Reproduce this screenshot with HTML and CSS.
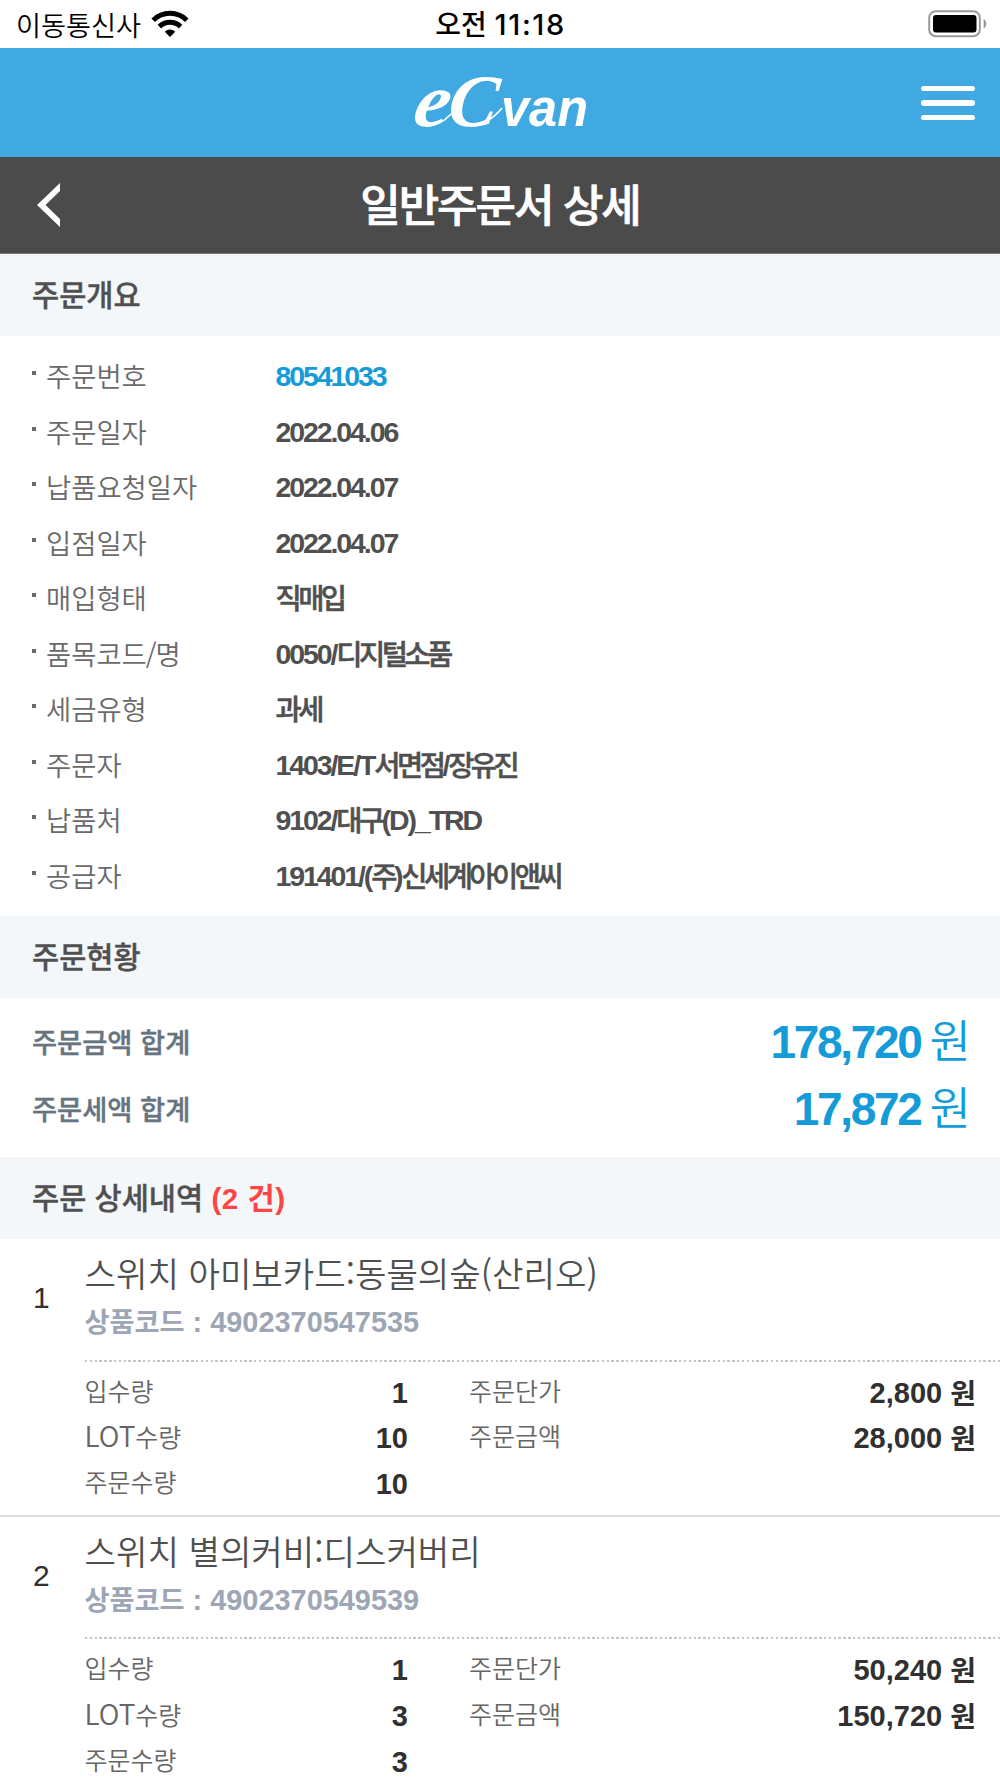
FILE: index.html
```html
<!DOCTYPE html>
<html lang="ko">
<head>
<meta charset="utf-8">
<title>일반주문서 상세</title>
<link rel="stylesheet" href="styles.css">
</head>
<body>
<div class="status">
  <div class="carrier"><span>이동통신사</span>
    <svg class="wifi" width="38" height="28" viewBox="0 0 38 28"><g fill="none" stroke="#000" stroke-width="5"><path d="M2.2 10.2a24 24 0 0 1 33.600 0"/><path d="M8.4 16.6a15.2 15.2 0 0 1 21.2 0"/></g><path d="M19 27l-5.2-5.3a7.4 7.4 0 0 1 10.4 0z"/></svg>
  </div>
  <div class="clock">오전 <span class="time">11:18</span></div>
  <svg class="battery" width="60" height="28" viewBox="0 0 60 28"><rect x="1.2" y="1.2" width="50.6" height="25" rx="6.5" fill="none" stroke="#999" stroke-width="2"/><rect x="5" y="5" width="43.5" height="17.5" rx="3" fill="#000"/><path d="M55.6 9c3.6 1.6 3.6 8 0 9.600z" fill="#999"/></svg>
</div>
<header class="brand">
  <svg class="logo" width="180" height="80" viewBox="0 0 180 80" fill="#fff"><text class="logo-e" transform="translate(1 54) skewX(-12)" textLength="35" lengthAdjust="spacingAndGlyphs">e</text><text class="logo-c" transform="translate(36 54) skewX(-8)" textLength="49" lengthAdjust="spacingAndGlyphs">C</text><text class="logo-van" x="91" y="54" textLength="87" lengthAdjust="spacingAndGlyphs">van</text><path d="M16 54.300Q30 54 41 42M60 54.300Q78 53 92 36" fill="none" stroke="#fff" stroke-width="1.6"/></svg>
  <div class="menu"><i></i><i></i><i></i></div>
</header>
<div class="titlebar">
  <svg class="back" width="24" height="44" viewBox="0 0 24 44"><path d="M23 0v8L8.500 22 23 36v8L0 22z" fill="#fff"/></svg>
  <h1>일반주문서 상세</h1>
</div>

<h2>주문개요</h2>
<dl class="overview">
  <div><dt>주문번호</dt><dd class="link">80541033</dd></div>
  <div><dt>주문일자</dt><dd>2022.04.06</dd></div>
  <div><dt>납품요청일자</dt><dd>2022.04.07</dd></div>
  <div><dt>입점일자</dt><dd>2022.04.07</dd></div>
  <div><dt>매입형태</dt><dd><b>직매입</b></dd></div>
  <div><dt>품목코드<span class="slash">/</span>명</dt><dd>0050/<b>디지털소품</b></dd></div>
  <div><dt>세금유형</dt><dd><b>과세</b></dd></div>
  <div><dt>주문자</dt><dd>1403/E/T<b>서면점</b>/<b>장유진</b></dd></div>
  <div><dt>납품처</dt><dd>9102/<b>대구</b>(D)_TRD</dd></div>
  <div><dt>공급자</dt><dd>191401/(<b>주</b>)<b>신세계아이앤씨</b></dd></div>
</dl>

<h2>주문현황</h2>
<dl class="totals">
  <div><dt>주문금액 합계</dt><dd>178,720<span>원</span></dd></div>
  <div><dt>주문세액 합계</dt><dd>17,872<span>원</span></dd></div>
</dl>

<h2>주문 상세내역 <em>(2 건)</em></h2>
<section class="item">
  <div class="no">1</div>
  <div class="body">
    <h3>스위치 아미보카드:동물의숲(산리오)</h3>
    <p class="code"><span>상품코드</span> : 4902370547535</p>
    <div class="grid">
      <span>입수량</span><b>1</b><span>주문단가</span><b>2,800 <i>원</i></b>
      <span><u>LOT</u>수량</span><b>10</b><span>주문금액</span><b>28,000 <i>원</i></b>
      <span>주문수량</span><b>10</b>
    </div>
  </div>
</section>
<section class="item">
  <div class="no">2</div>
  <div class="body">
    <h3>스위치 별의커비:디스커버리</h3>
    <p class="code"><span>상품코드</span> : 4902370549539</p>
    <div class="grid">
      <span>입수량</span><b>1</b><span>주문단가</span><b>50,240 <i>원</i></b>
      <span><u>LOT</u>수량</span><b>3</b><span>주문금액</span><b>150,720 <i>원</i></b>
      <span>주문수량</span><b>3</b>
    </div>
  </div>
</section>
</body>
</html>
```
FILE: styles.css
```css
* { box-sizing: border-box; }
html { overflow: hidden; }
body {
  margin: 0; width: 1000px; height: 1778px; overflow: hidden; background: #fff; color: #505050;
  font-family: "Liberation Sans", "Noto Sans CJK KR", sans-serif;
}
h1, h2, h3, p, dl, dd { margin: 0; }

.status {
  height: 48px; display: grid; grid-template-columns: 1fr auto 1fr; align-items: center;
  padding: 0 12px 0 16px; color: #000; font-family: "Noto Sans CJK KR", sans-serif;
}
.carrier { display: flex; align-items: center; gap: 10px; font-size: 27.2px; font-weight: 350; line-height: 46px; }
.clock { font-size: 28px; font-weight: 500; line-height: 46px; margin-right: 3px; }
.time { font-family: Inter, sans-serif; font-size: 29px; font-weight: 500; letter-spacing: 1.6px; }
.battery { justify-self: end; }

.brand { height: 109px; background: #40a9e2; display: grid; grid-template-columns: 1fr auto 1fr; align-items: start; padding: 24px 25px 0; }
.logo { grid-column: 2; overflow: visible; }
.logo-e, .logo-c { font-family: "Liberation Serif", serif; font-style: italic; font-weight: bold; }
.logo-e { font-size: 76px; }
.logo-c { font-size: 74px; }
.logo-van { font: italic bold 51px "Liberation Sans", sans-serif; }
.menu { justify-self: end; width: 54px; padding-top: 13.5px; display: grid; gap: 9px; }
.menu i { height: 5.5px; border-radius: 3px; background: #fff; }

.titlebar { height: 97px; background: #4b4b4b; border-bottom: 1px solid #777; display: grid; grid-template-columns: 61px 1fr 61px; align-items: center; }
.back { justify-self: end; }
h1 { text-align: center; color: #fff; font-size: 44px; font-weight: 500; line-height: 88px; height: 92px; letter-spacing: -2px; -webkit-text-stroke: 0.7px; font-family: "Noto Sans CJK KR", sans-serif; }

h2 { height: 82px; line-height: 79px; padding-left: 32px; background: #f3f7fa; font-size: 29.5px; font-weight: 500; -webkit-text-stroke: 0.4px; font-family: "Noto Sans CJK KR", sans-serif; }
h2 em { color: #ff4444; font-style: normal; font-weight: 700; -webkit-text-stroke: 0; letter-spacing: 0.6px; font-family: "Liberation Sans", "Noto Sans CJK KR", sans-serif; }

.overview { height: 579.5px; padding: 13px 32px 0; }
.overview div { height: 55.5px; line-height: 55.5px; display: grid; grid-template-columns: 243.5px 1fr; font-size: 28.5px; }
.overview dt { display: flex; color: #6a6a6a; font-family: "Noto Sans CJK KR", sans-serif; font-size: 27.4px; font-weight: 350; line-height: 52.5px; }
.overview dt::before { content: ""; width: 4px; height: 4px; margin: 22px 10px 0 0; background: #6a6a6a; }
.slash { margin: 0 -1px; }
.overview dd { font-weight: bold; letter-spacing: -2.1px; white-space: nowrap; }
.overview b { font-weight: 500; letter-spacing: -3.55px; -webkit-text-stroke: 0.5px; position: relative; top: 1px; }
.overview .link { color: #159bd7; }

.totals { height: 159.5px; padding: 11px 32px 0; }
.totals div { height: 67.5px; line-height: 67.5px; display: flex; justify-content: space-between; }
.totals dt { color: #667480; font-size: 27.3px; font-weight: 500; line-height: 65px; -webkit-text-stroke: 0.4px; font-family: "Noto Sans CJK KR", sans-serif; }
.totals dd { color: #159bd7; font-size: 46px; font-weight: bold; letter-spacing: -2.3px; margin-right: -3px; }
.totals span { font-size: 45px; font-weight: 350; margin-left: 9px; letter-spacing: 0; }

.item { height: 277.5px; border-bottom: 2px solid #ddd; display: grid; grid-template-columns: 84.5px 1fr; }
.no { padding-left: 33px; font-size: 30px; line-height: 117px; color: #303030; }
h3 { height: 69px; font-size: 34.2px; font-weight: 350; line-height: 67px; font-family: "Noto Sans CJK KR", sans-serif; white-space: nowrap; }
.code { color: #9da6b4; font-size: 28.9px; font-weight: bold; line-height: 29px; height: 28px; }
.code span { font-size: 27.2px; }
.grid {
  margin-top: 23.5px; padding: 10px 24px 0 0; line-height: 46px;
  display: grid; grid-template-columns: 200px 123.5px 1fr 300px; grid-auto-rows: 45.8px;
  background: repeating-linear-gradient(90deg, #c4c4c4 0 2.4px, #fff 2.4px 4.83px) top / 100% 2px no-repeat;
}
.grid span { font-size: 25px; font-weight: 350; color: #666; line-height: 41px; font-family: "Noto Sans CJK KR", sans-serif; }
.grid u { text-decoration: none; font-size: 28px; }
.grid i { font-style: normal; font-size: 28px; position: relative; top: 1px; }
.grid span:nth-child(4n+3) { padding-left: 61px; }
.grid b { text-align: right; font-size: 29px; color: #303030; }
```
